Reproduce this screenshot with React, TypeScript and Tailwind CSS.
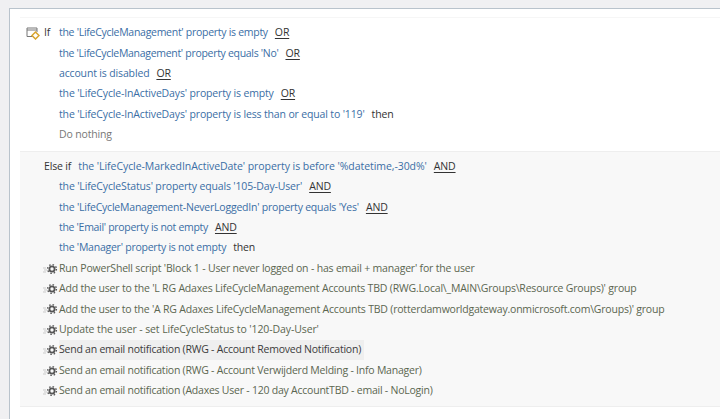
const blue = "text-[#3a6ea5]";

function Op({ children }: { children: string }) {
  return <span className="ml-[7px] text-[#333] underline underline-offset-2">{children}</span>;
}

function Cond({ text, op, then, track = "" }: { text: string; op?: string; then?: boolean; track?: string }) {
  return (
    <div className="flex h-[20.4px] items-center pl-[39px]">
      <span className={`${blue} ${track}`}>{text}</span>
      {op && <Op>{op}</Op>}
      {then && <span className="ml-[7px] text-[#333]">then</span>}
    </div>
  );
}

function GearIcon() {
  return (
    <svg width="15" height="12" viewBox="0 0 15 12" className="mr-[1px] shrink-0">
      <path d="M0 5h3M1 7h3M0 9h3" stroke="#c9c9c9" strokeWidth="1" />
      <circle cx="9" cy="6" r="2.6" fill="none" stroke="#555" strokeWidth="1.8" />
      <circle cx="9" cy="6" r="4.4" fill="none" stroke="#555" strokeWidth="1.4" strokeDasharray="1.5 1.96" />
    </svg>
  );
}

function Action({ text, selected, track = "tracking-[-0.23px]" }: { text: string; selected?: boolean; track?: string }) {
  return (
    <div className="flex h-[20.4px] items-center pl-[23px]">
      <GearIcon />
      <span className={`flex h-full items-center pr-[3px] ${track} ${selected ? "bg-[#efefef] text-[#3c3c3c]" : "text-[#5b6650]"}`}>{text}</span>
    </div>
  );
}

export default function App() {
  return (
    <div className="h-[419px] w-[720px] overflow-hidden bg-[#f0f0f2] pl-[9px] pt-2 font-['Open_Sans',sans-serif] text-[10.5px] tracking-[-0.15px]">
      <div className="h-full border-l border-t border-[#b9c3cc] bg-white pl-[10px] pt-[8px]">
        {/* If block */}
        <div className="h-[134px] border-t border-[#f6f6f6] pt-[5px]">
          <div className="flex h-[20.4px] items-center">
            <svg width="14" height="13" viewBox="0 0 14 13" className="ml-[6px] shrink-0">
              <path d="M9 9.5H1V1h10v4M1 3h10" fill="none" stroke="#777" strokeWidth="1" />
              <path d="M9.5 5l3.5 3.5-3.5 3.5L6 8.5z" fill="#fff" stroke="#d9a52e" strokeWidth="1.5" />
            </svg>
            <span className="ml-[4px] w-[15px] text-[#333]">If</span>
            <span className={`${blue} tracking-[-0.28px]`}>the 'LifeCycleManagement' property is empty</span>
            <Op>OR</Op>
          </div>
          <Cond text="the 'LifeCycleManagement' property equals 'No'" op="OR" track="tracking-[-0.3px]" />
          <Cond text="account is disabled" op="OR" />
          <Cond text="the 'LifeCycle-InActiveDays' property is empty" op="OR" />
          <Cond text="the 'LifeCycle-InActiveDays' property is less than or equal to '119'" then />
          <div className="flex h-[20.4px] items-center pl-[39px] text-[#777]">Do nothing</div>
        </div>

        {/* Else if block */}
        <div className="h-[256px] border-y border-[#eeeeee] bg-[#f8f8f8] pt-[4.5px]">
          <div className="flex h-[20.4px] items-center pl-[24px]">
            <span className="mr-[7px] text-[#333]">Else if</span>
            <span className={`${blue} tracking-[-0.06px]`}>the 'LifeCycle-MarkedInActiveDate' property is before '%datetime,-30d%'</span>
            <Op>AND</Op>
          </div>
          <Cond text="the 'LifeCycleStatus' property equals '105-Day-User'" op="AND" />
          <Cond text="the 'LifeCycleManagement-NeverLoggedIn' property equals 'Yes'" op="AND" track="tracking-[-0.22px]" />
          <Cond text="the 'Email' property is not empty" op="AND" track="tracking-[-0.3px]" />
          <Cond text="the 'Manager' property is not empty" then track="tracking-[-0.24px]" />
          <Action text="Run PowerShell script 'Block 1 - User never logged on - has email + manager' for the user" track="tracking-[-0.19px]" />
          <Action text="Add the user to the 'L RG Adaxes LifeCycleManagement Accounts TBD (RWG.Local\_MAIN\Groups\Resource Groups)' group" track="tracking-[-0.19px]" />
          <Action text="Add the user to the 'A RG Adaxes LifeCycleManagement Accounts TBD (rotterdamworldgateway.onmicrosoft.com\Groups)' group" track="tracking-[-0.2px]" />
          <Action text="Update the user - set LifeCycleStatus to '120-Day-User'" track="tracking-[-0.1px]" />
          <Action text="Send an email notification (RWG - Account Removed Notification)" selected />
          <Action text="Send an email notification (RWG - Account Verwijderd Melding - Info Manager)" />
          <Action text="Send an email notification (Adaxes User - 120 day AccountTBD - email - NoLogin)" />
        </div>

        {/* Next block, cut off by the window */}
        <div className="flex h-[28px] items-center pl-[24px] pt-[6px]">
          <span className="mr-[7px] text-[#333]">Else if</span>
          <span className={`${blue} tracking-[-0.06px]`}>the 'LifeCycle-MarkedInActiveDate' property is before '%datetime,-60d%'</span>
        </div>
      </div>
    </div>
  );
}
